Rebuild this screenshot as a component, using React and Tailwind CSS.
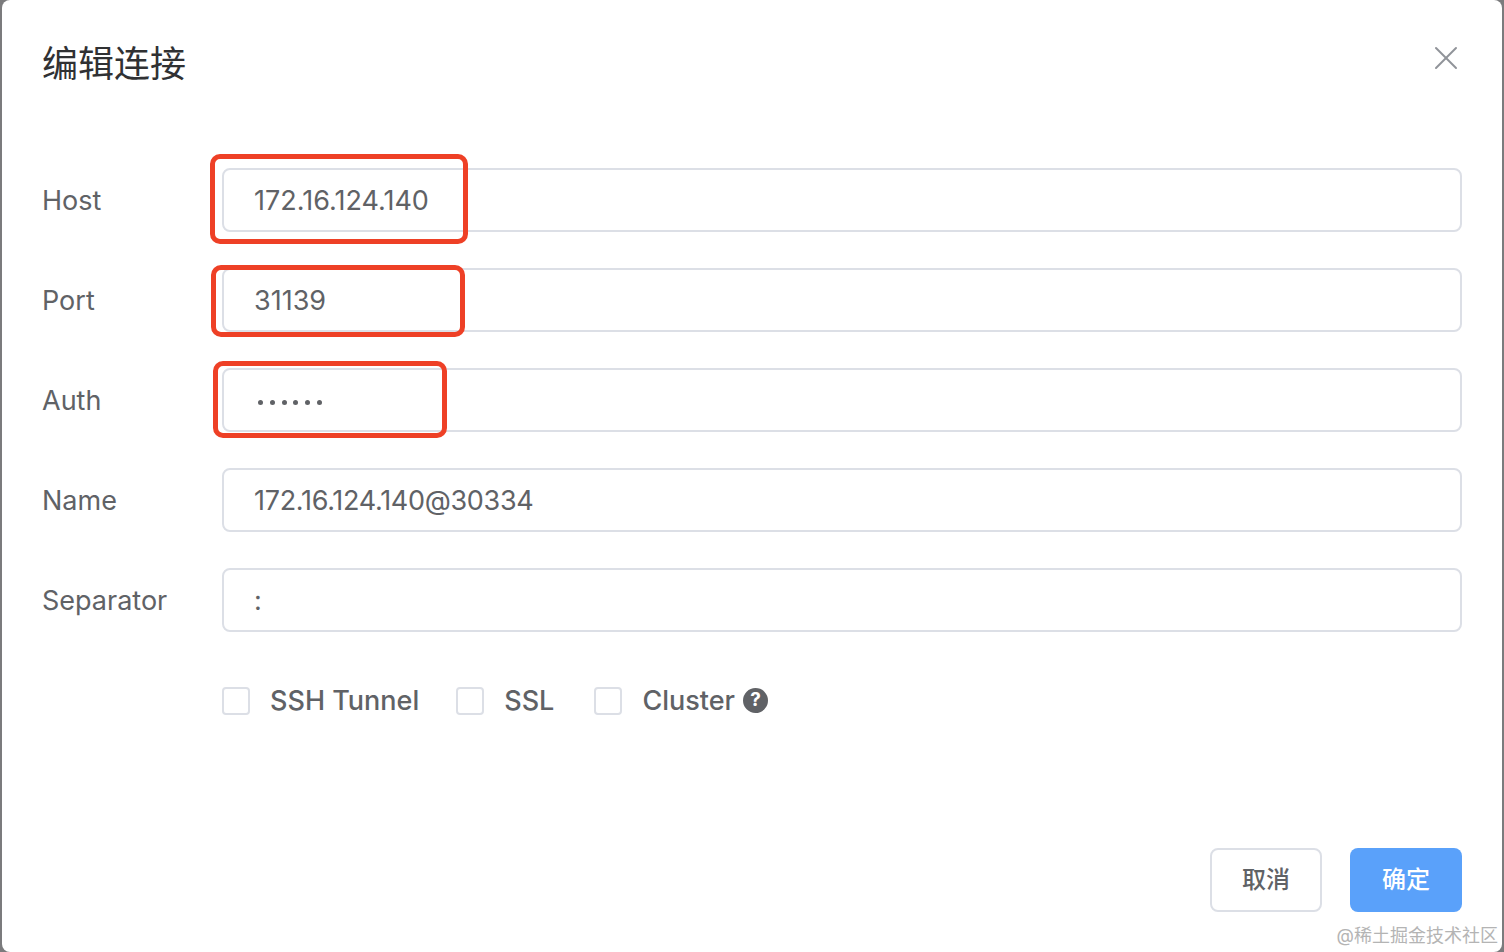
import React from 'react';
import { X } from 'lucide-react';

const font = "font-['Inter','Noto_Sans_CJK_SC',sans-serif]";

function Field({ label, value, mark, dots, tight }) {
  return (
    <div className="flex items-center h-[64px] mb-[36px]">
      <label className="w-[180px] pt-[2px] text-[27px] text-[#606266]">{label}</label>
      <div className="relative flex-1 h-[64px]">
        <div className={`flex items-center h-full pl-[30px] pt-[2px] border-2 border-[#dcdfe6] rounded-lg bg-white text-[27px] text-[#606266] ${tight ? 'tracking-[-0.3px]' : ''}`}>
          {dots ? (
            <span className="flex gap-[6.8px] pl-[4px] mt-[2px]">
              {[0, 1, 2, 3, 4, 5].map(i => (
                <span key={i} className="w-[5px] h-[5px] rounded-full bg-[#606266]" />
              ))}
            </span>
          ) : value}
        </div>
        {mark && <div className={mark} />}
      </div>
    </div>
  );
}

function Check({ label, className }) {
  return (
    <div className={`flex items-center ${className}`}>
      <span className="w-[28px] h-[28px] border-2 border-[#dcdfe6] rounded-[4px] bg-white" />
      <span className="ml-[20px] text-[27px] font-medium text-[#606266]">{label}</span>
    </div>
  );
}

export default function App() {
  return (
    <div className={`h-[952px] w-full bg-[#7b7b7d] px-[2px] ${font}`}>
      <div className="relative h-full bg-white rounded-lg pt-[40px] px-[40px]">
        <div className="flex items-start justify-between">
          <h1 className="text-[36px] leading-[48px] text-[#303133]">编辑连接</h1>
          <button className="block mt-[-2px] mr-[-4px] text-[#909399]">
            <X size={40} strokeWidth={1.2} />
          </button>
        </div>

        <form className="mt-[80px]">
          <Field label="Host" value="172.16.124.140" mark="absolute left-[-12px] top-[-14px] w-[258px] h-[90px] border-[5px] border-[#ee4026] rounded-[10px]" />
          <Field label="Port" value="31139" mark="absolute left-[-11px] top-[-3px] w-[254px] h-[72px] border-[5px] border-[#ee4026] rounded-[10px]" />
          <Field label="Auth" dots mark="absolute left-[-9px] top-[-7px] w-[234px] h-[77px] border-[5px] border-[#ee4026] rounded-[10px]" />
          <Field label="Name" value="172.16.124.140@30334" tight />
          <Field label="Separator" value=":" />

          <div className="flex items-center ml-[180px] mt-[53px] h-[32px]">
            <Check label="SSH Tunnel" />
            <Check label="SSL" className="ml-[37px]" />
            <Check label="Cluster" className="ml-[40px]" />
            <span className="ml-[8px] mt-[-2px] flex items-center justify-center w-[25px] h-[25px] rounded-full bg-[#606266] text-white text-[19px] font-bold">?</span>
          </div>
        </form>

        <div className="flex justify-end gap-[28px] mt-[131px]">
          <button className="w-[112px] h-[64px] border-2 border-[#dcdfe6] rounded-lg bg-white text-[24px] font-medium text-[#606266]">取消</button>
          <button className="w-[112px] h-[64px] rounded-lg bg-[#5aa1fa] text-[24px] font-medium text-white">确定</button>
        </div>

        <div className="absolute right-[4px] bottom-[4px] text-[18px] leading-[24px] text-[#b4b4b4]">@稀土掘金技术社区</div>
      </div>
    </div>
  );
}
